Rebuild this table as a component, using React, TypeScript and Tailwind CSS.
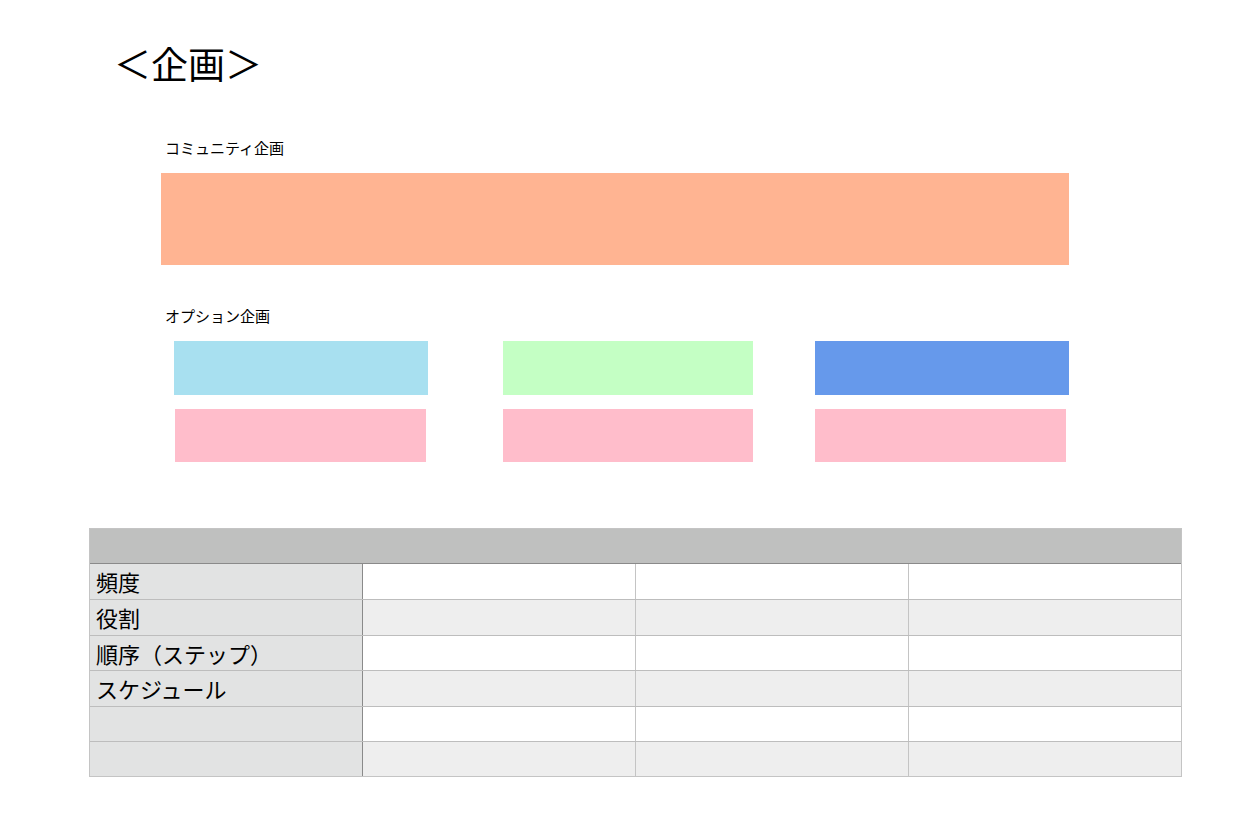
const rows = ['頻度', '役割', '順序（ステップ）', 'スケジュール', '', ''];

function Box({ className }: { className: string }) {
  return <div className={className} />;
}

export default function App() {
  return (
    <div
      className="w-[1246px] h-[820px] bg-white text-black flex flex-col"
      style={{ fontFamily: '"Noto Sans CJK JP", "Noto Sans", sans-serif' }}
    >
      <h1 className="mt-[45px] ml-[114px] text-[37px] leading-none font-normal">＜企画＞</h1>

      <p className="mt-[58px] ml-[165px] text-[15px] leading-none">コミュニティ企画</p>
      <div className="mt-[18px] ml-[161px] w-[908px] h-[92px] bg-[#ffb492]" />

      <p className="mt-[43px] ml-[165px] text-[15px] leading-none">オプション企画</p>
      <div className="mt-[18px] flex flex-col gap-[14px]">
        <div className="flex h-[54px]">
          <Box className="ml-[174px] w-[254px] bg-[#a8e0f0]" />
          <Box className="ml-[75px] w-[250px] bg-[#c4ffc4]" />
          <Box className="ml-[62px] w-[254px] bg-[#6699eb]" />
        </div>
        <div className="flex h-[53px]">
          <Box className="ml-[175px] w-[251px] bg-[#ffbdcb]" />
          <Box className="ml-[77px] w-[250px] bg-[#ffbdcb]" />
          <Box className="ml-[62px] w-[251px] bg-[#ffbdcb]" />
        </div>
      </div>

      <div className="mt-[66px] ml-[89px] w-[1093px] border border-[#c4c4c4]">
        <div className="h-[35px] bg-[#bfc0bf] border-b border-[#8a8a8a]" />
        {rows.map((label, i) => (
          <div
            key={i}
            className={`grid grid-cols-[273px_273px_273px_1fr] h-[35.4px] ${i > 0 ? 'border-t border-[#bdbdbd]' : ''} ${
              i % 2 === 0 ? 'bg-white' : 'bg-[#eeeeee]'
            }`}
          >
            <div className="bg-[#e2e3e3] border-r border-[#8a8a8a] pl-[6px] pt-[2px] text-[22px] leading-[30px]">
              {label}
            </div>
            <div className="border-r border-[#c4c4c4]" />
            <div className="border-r border-[#c4c4c4]" />
            <div />
          </div>
        ))}
      </div>
    </div>
  );
}
